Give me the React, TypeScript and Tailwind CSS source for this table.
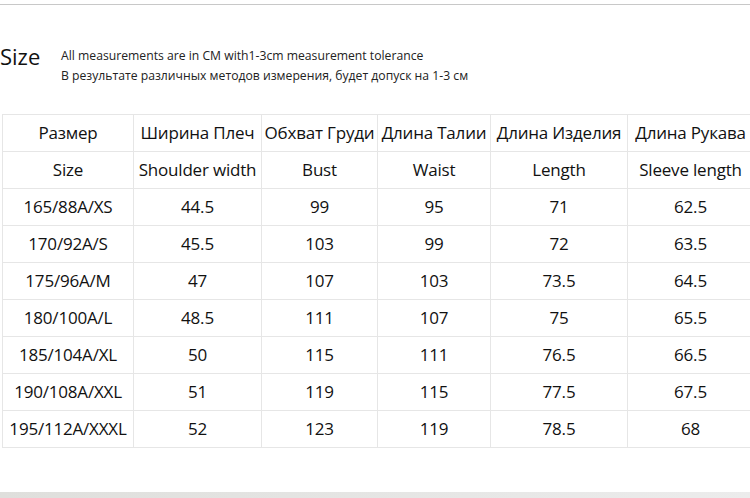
const headRu = ["Размер", "Ширина Плеч", "Обхват Груди", "Длина Талии", "Длина Изделия", "Длина Рукава"];
const headEn = ["Size", "Shoulder width", "Bust", "Waist", "Length", "Sleeve length"];

const rows = [
  ["165/88A/XS", "44.5", "99", "95", "71", "62.5"],
  ["170/92A/S", "45.5", "103", "99", "72", "63.5"],
  ["175/96A/M", "47", "107", "103", "73.5", "64.5"],
  ["180/100A/L", "48.5", "111", "107", "75", "65.5"],
  ["185/104A/XL", "50", "115", "111", "76.5", "66.5"],
  ["190/108A/XXL", "51", "119", "115", "77.5", "67.5"],
  ["195/112A/XXXL", "52", "123", "119", "78.5", "68"],
];

function Row({ cells }: { cells: string[] }) {
  return (
    <>
      {cells.map((c, i) => (
        <div
          key={i}
          className="h-[37px] flex items-center justify-center border-r border-b border-[#e6e6e6] whitespace-nowrap"
        >
          {c}
        </div>
      ))}
    </>
  );
}

export default function App() {
  return (
    <div
      className="w-[750px] h-[498px] bg-white overflow-hidden flex flex-col text-[#111]"
      style={{ fontFamily: '"Open Sans", "Liberation Sans", sans-serif' }}
    >
      <div className="mt-[4px] h-px bg-[#c8c8c8]" />

      <div className="flex items-start mt-[36px] h-[73px]">
        <div className="text-[22px] leading-[30px] w-[61px]">Size</div>
        <div className="text-[12.2px] leading-[20px] pt-[5px] text-[#222]">
          <p>All measurements are in CM with1-3cm measurement tolerance</p>
          <p>В результате различных методов измерения, будет допуск на 1-3 см</p>
        </div>
      </div>

      {/* last column runs past the right edge, so its border is cut off */}
      <div className="ml-[2px] grid grid-cols-[131px_128px_116px_113px_137px_126px] border-t border-l border-[#e6e6e6] text-[17px] tracking-[-0.2px] w-max">
        <Row cells={headRu} />
        <Row cells={headEn} />
        {rows.map((r, i) => (
          <Row key={i} cells={r} />
        ))}
      </div>

      <div className="flex-1" />
      <div className="h-[6px] bg-gradient-to-r from-[#dfdfdc] to-[#ececec]" />
    </div>
  );
}
